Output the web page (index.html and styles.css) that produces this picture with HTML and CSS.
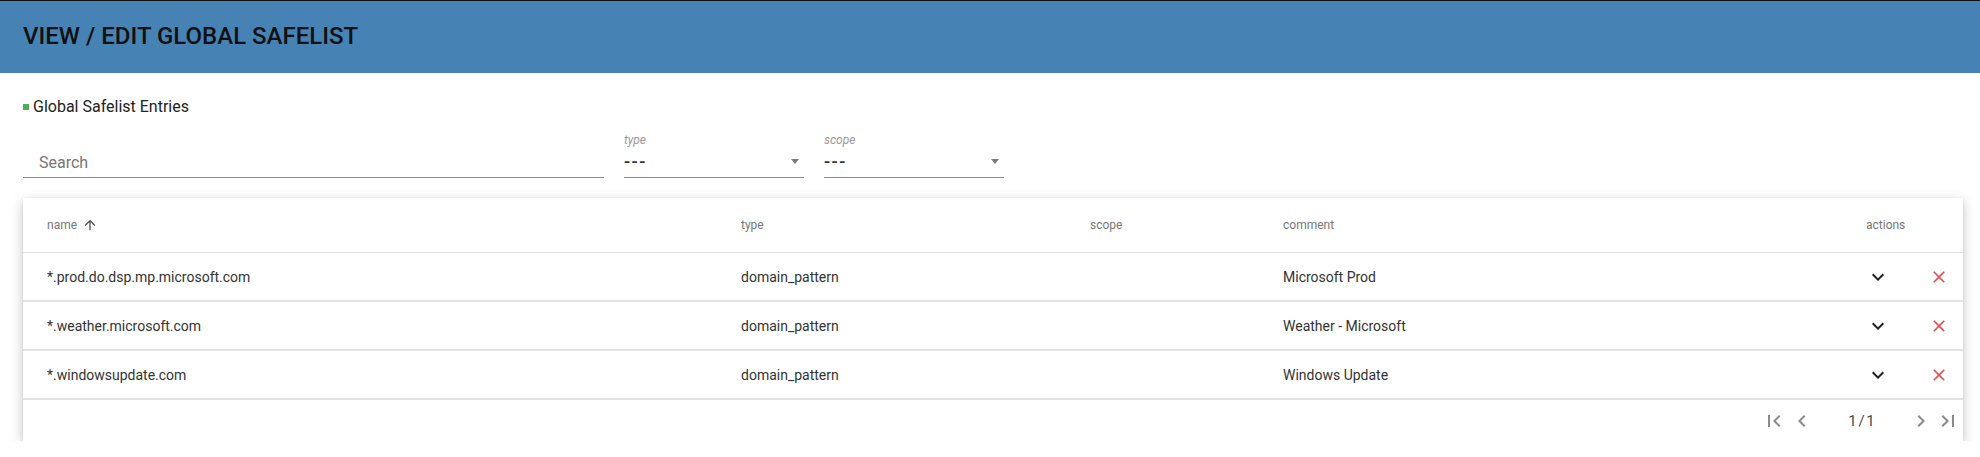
FILE: index.html
```html
<!DOCTYPE html>
<html lang="en">
<head>
<meta charset="utf-8">
<title>View / Edit Global Safelist</title>
<link rel="stylesheet" href="styles.css">
</head>
<body>
<header class="topbar">
  <h1 class="title">VIEW / EDIT GLOBAL SAFELIST</h1>
</header>
<main class="content">
  <h2 class="section-title"><span class="marker"></span>Global Safelist Entries</h2>

  <div class="filters">
    <div class="search"><span class="placeholder">Search</span></div>
    <div class="select">
      <div class="select-label">type</div>
      <div class="select-value"><span class="dashes">---</span><span class="caret"></span></div>
    </div>
    <div class="select">
      <div class="select-label">scope</div>
      <div class="select-value"><span class="dashes">---</span><span class="caret"></span></div>
    </div>
  </div>

  <section class="card">
    <div class="row head">
      <div class="cell sortable">name
        <svg class="sort-icon" viewBox="0 0 24 24"><path d="M4 12l1.41 1.41L11 7.83V20h2V7.83l5.58 5.59L20 12l-8-8-8 8z"/></svg>
      </div>
      <div class="cell">type</div>
      <div class="cell">scope</div>
      <div class="cell">comment</div>
      <div class="cell">actions</div>
    </div>

    <div class="row data">
      <div class="cell">*.prod.do.dsp.mp.microsoft.com</div>
      <div class="cell">domain_pattern</div>
      <div class="cell"></div>
      <div class="cell">Microsoft Prod</div>
      <div class="cell actions">
        <span class="icon-btn"><svg class="expand" viewBox="0 0 24 24"><path d="M16.59 8.59L12 13.17 7.41 8.59 6 10l6 6 6-6z"/></svg></span>
        <span class="icon-btn"><svg class="close" viewBox="0 0 24 24"><path d="M19 6.41L17.59 5 12 10.59 6.41 5 5 6.41 10.59 12 5 17.59 6.41 19 12 13.41 17.59 19 19 17.59 13.41 12z"/></svg></span>
      </div>
    </div>

    <div class="row data">
      <div class="cell">*.weather.microsoft.com</div>
      <div class="cell">domain_pattern</div>
      <div class="cell"></div>
      <div class="cell">Weather - Microsoft</div>
      <div class="cell actions">
        <span class="icon-btn"><svg class="expand" viewBox="0 0 24 24"><path d="M16.59 8.59L12 13.17 7.41 8.59 6 10l6 6 6-6z"/></svg></span>
        <span class="icon-btn"><svg class="close" viewBox="0 0 24 24"><path d="M19 6.41L17.59 5 12 10.59 6.41 5 5 6.41 10.59 12 5 17.59 6.41 19 12 13.41 17.59 19 19 17.59 13.41 12z"/></svg></span>
      </div>
    </div>

    <div class="row data">
      <div class="cell">*.windowsupdate.com</div>
      <div class="cell">domain_pattern</div>
      <div class="cell"></div>
      <div class="cell">Windows Update</div>
      <div class="cell actions">
        <span class="icon-btn"><svg class="expand" viewBox="0 0 24 24"><path d="M16.59 8.59L12 13.17 7.41 8.59 6 10l6 6 6-6z"/></svg></span>
        <span class="icon-btn"><svg class="close" viewBox="0 0 24 24"><path d="M19 6.41L17.59 5 12 10.59 6.41 5 5 6.41 10.59 12 5 17.59 6.41 19 12 13.41 17.59 19 19 17.59 13.41 12z"/></svg></span>
      </div>
    </div>

    <div class="pager">
      <span class="pager-btn"><svg viewBox="0 0 24 24"><path d="M18.41 16.59L13.82 12l4.59-4.59L17 6l-6 6 6 6zM6 6h2v12H6z"/></svg></span>
      <span class="pager-btn gap-left"><svg viewBox="0 0 24 24"><path d="M15.41 7.41L14 6l-6 6 6 6 1.41-1.41L10.83 12z"/></svg></span>
      <span class="pager-page">1 / 1</span>
      <span class="pager-btn"><svg viewBox="0 0 24 24"><path d="M10 6L8.59 7.41 13.17 12l-4.58 4.59L10 18l6-6z"/></svg></span>
      <span class="pager-btn gap-small"><svg viewBox="0 0 24 24"><path d="M5.59 7.41L10.18 12l-4.59 4.59L7 18l6-6-6-6zM16 6h2v12h-2z"/></svg></span>
    </div>
  </section>
</main>
</body>
</html>
```

FILE: styles.css
```css
* {
  box-sizing: border-box;
}

body {
  margin: 0;
  background: #ffffff;
  color: #333333;
  font-family: Roboto, "Liberation Sans", sans-serif;
}

/* ---------- top bar ---------- */
.topbar {
  height: 73px;
  background: #4682b4;
  border-top: 1px solid #111111;
  display: flex;
  align-items: center;
  padding: 0 0 2px 23px;
}

.title {
  margin: 0;
  font-size: 24px;
  line-height: 1;
  font-weight: 500;
  color: #111111;
}

/* ---------- content ---------- */
.content {
  padding: 0 17px 0 23px;
}

.section-title {
  margin: 24px 0 0;
  display: flex;
  align-items: center;
  gap: 4px;
  font-size: 16px;
  line-height: 20px;
  font-weight: 400;
  color: #222222;
}

.marker {
  width: 6px;
  height: 6px;
  background: #4caf50;
  display: inline-block;
}

/* ---------- filters ---------- */
.filters {
  margin-top: 16px;
  display: flex;
  align-items: flex-end;
  gap: 20px;
}

.search {
  width: 581px;
  padding: 0 16px 4px;
  border-bottom: 1px solid #8a8a8a;
  font-size: 16px;
  line-height: 20px;
}

.placeholder {
  color: #767676;
}

.select {
  width: 180px;
}

.select-label {
  font-size: 12px;
  line-height: 14px;
  font-style: italic;
  color: #9a9a9a;
}

.select-value {
  height: 31px;
  padding-bottom: 2px;
  border-bottom: 1px solid #8a8a8a;
  display: flex;
  align-items: center;
  justify-content: space-between;
}

.dashes {
  font-size: 18px;
  font-weight: 500;
  letter-spacing: 1.5px;
  color: #333333;
}

.caret {
  width: 0;
  height: 0;
  border-left: 4px solid transparent;
  border-right: 4px solid transparent;
  border-top: 5px solid #7a7a7a;
  margin-right: 5px;
}

/* ---------- card / table ---------- */
.card {
  margin-top: 20px;
  background: #ffffff;
  box-shadow: 0 4px 12px rgba(0, 0, 0, 0.22), 0 1px 3px rgba(0, 0, 0, 0.1);
}

.row {
  display: grid;
  grid-template-columns: 694px 349px 193px 583px 85px;
  align-items: center;
  padding: 0 12px 0 24px;
}

.head {
  height: 55px;
  border-bottom: 1px solid #e2e2e2;
  font-size: 12px;
  color: #777777;
}

.data {
  height: 49px;
  border-bottom: 2px solid #e2e2e2;
  font-size: 14px;
  color: #333333;
}

.sortable {
  display: flex;
  align-items: center;
  gap: 5px;
}

.sort-icon {
  width: 16px;
  height: 16px;
  fill: #555555;
}

.actions {
  display: flex;
  align-items: center;
  justify-content: space-between;
}

.icon-btn {
  width: 24px;
  height: 24px;
  display: flex;
  align-items: center;
  justify-content: center;
}

.expand {
  width: 24px;
  height: 24px;
  fill: #222222;
}

.close {
  width: 20px;
  height: 20px;
  fill: #e05252;
}

/* ---------- pager ---------- */
.pager {
  height: 41px;
  display: flex;
  align-items: center;
  justify-content: flex-end;
  padding-right: 3px;
}

.pager-btn {
  width: 24px;
  height: 24px;
  display: flex;
}

.pager-btn svg {
  width: 24px;
  height: 24px;
  fill: #8a8a8a;
}

.gap-left {
  margin-left: 4px;
}

.gap-small {
  margin-left: 3px;
}

.pager-page {
  width: 95px;
  text-align: center;
  font-size: 15px;
  color: #4a4a4a;
  word-spacing: -2px;
}
```
